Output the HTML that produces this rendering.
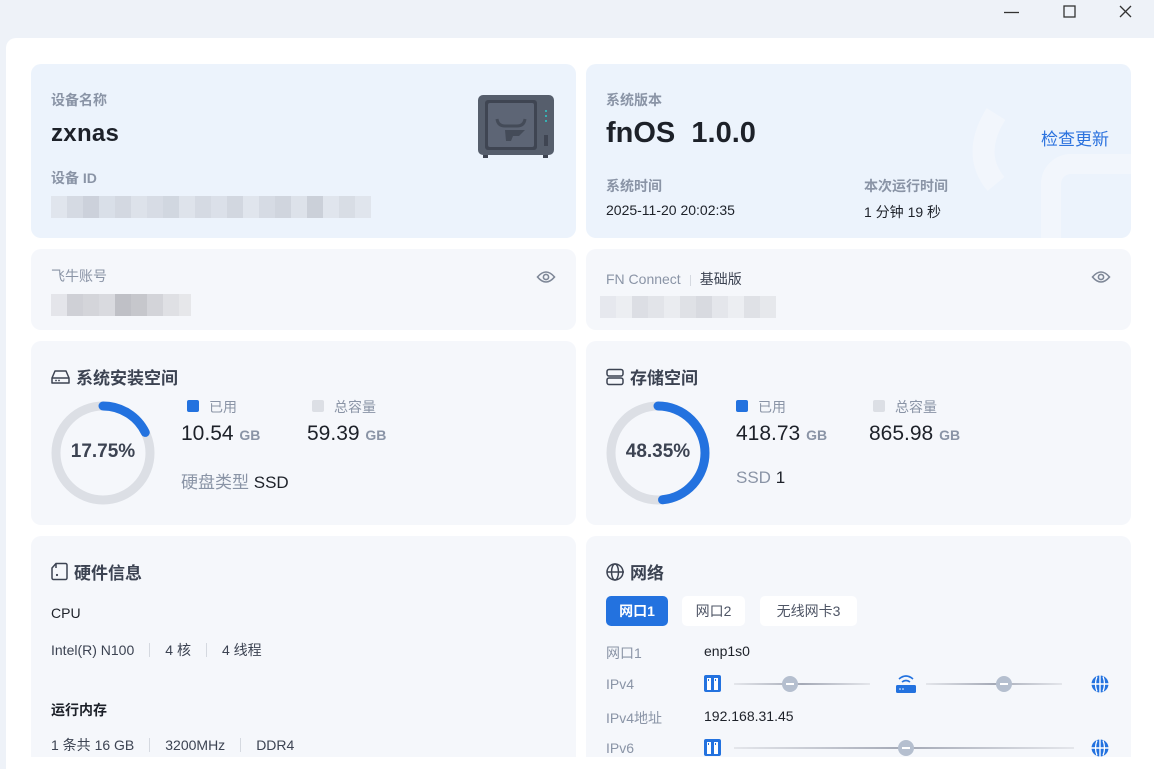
<!DOCTYPE html>
<html><head><meta charset="utf-8">
<style>
*{margin:0;padding:0;box-sizing:border-box}
body{width:1154px;height:769px;overflow:hidden;background:#eef2f8;font-family:"Liberation Sans","Noto Sans CJK SC",sans-serif;position:relative;color:#1d2129}
.panel{position:absolute;left:6px;top:38px;width:1148px;height:731px;background:#fff;border-radius:10px 0 0 0;overflow:hidden}
.clip{position:absolute;left:0;top:0;width:1148px;height:719px;overflow:hidden}
.card{position:absolute;background:#f5f7fb;border-radius:10px}
.blue{background:#ecf3fc}
.lbl{position:absolute;font-size:14px;color:#8a94a6}
.t{position:absolute;white-space:nowrap}
.h{position:absolute;font-size:17px;font-weight:bold;color:#3c4352;display:flex;align-items:center;gap:6px}
.blk{position:absolute;height:22px;display:flex}
.blk i{display:block;width:16px;height:22px}
.sep{display:inline-block;width:1px;height:14px;background:#d5d9e0;margin:0 15px;vertical-align:-2px}
.tab{position:absolute;top:60px;height:30px;border-radius:5px;background:#fff;font-size:14px;color:#4e5565;text-align:center;line-height:30px}
</style></head><body>
<div class="t" style="left:1004px;top:4px;font-size:0">
<svg width="140" height="18" viewBox="0 0 140 18"><path d="M0 8.5h15" stroke="#333" stroke-width="1.3"/><rect x="60" y="2" width="11" height="11" fill="none" stroke="#333" stroke-width="1.3"/><path d="M116 2l11 11M127 2l-11 11" stroke="#333" stroke-width="1.3"/></svg></div>
<div class="panel"><div class="clip">

<div class="card blue" style="left:25px;top:26px;width:545px;height:174px">
<div class="lbl" style="left:20px;top:26px;font-weight:bold">设备名称</div>
<div class="t" style="left:20px;top:56px;font-size:24px;font-weight:bold;color:#1d2129;letter-spacing:.3px">zxnas</div>
<div class="lbl" style="left:20px;top:104px;font-weight:bold">设备 ID</div>
<div class="blk" style="left:20px;top:132px;opacity:.9">
<i style="background:#dfe4ec"></i><i style="background:#d3d8e1"></i><i style="background:#c9ced8"></i><i style="background:#d8dde6"></i><i style="background:#d1d6df"></i><i style="background:#dce1e9"></i><i style="background:#d5dae3"></i><i style="background:#cfd4dd"></i><i style="background:#dde2ea"></i><i style="background:#d3d8e1"></i><i style="background:#dadfe7"></i><i style="background:#d0d5de"></i><i style="background:#dfe4ec"></i><i style="background:#d4d9e2"></i><i style="background:#cdd2db"></i><i style="background:#dce1e9"></i><i style="background:#c8cdd6"></i><i style="background:#dfe4ec"></i><i style="background:#d6dbe3"></i><i style="background:#dfe4ec"></i></div>
<svg style="position:absolute;left:446px;top:30px" width="78" height="66" viewBox="0 0 78 66">
<rect x="1" y="1" width="76" height="60" rx="5" fill="#565e6c"/>
<rect x="8" y="6" width="52" height="50" rx="3" fill="#3f4552"/>
<rect x="11" y="9" width="46" height="44" rx="2" fill="#5d6575"/>
<path d="M20 25q1 7 8 7h12q7 0 8-7" fill="none" stroke="#444b58" stroke-width="3"/>
<path d="M28 36h20l-6 6h-6l-2 5h-5z" fill="#444b58"/>
<circle cx="69" cy="17" r="1" fill="#2dc9c9"/><circle cx="69" cy="22" r="1" fill="#2dc9c9"/><circle cx="69" cy="27" r="1" fill="#2dc9c9"/>
<rect x="67" y="41" width="4" height="11" fill="#3f4552"/>
<rect x="6" y="61" width="5" height="3" fill="#3f4552"/><rect x="66" y="61" width="5" height="3" fill="#3f4552"/>
</svg>
</div>

<div class="card blue" style="left:580px;top:26px;width:545px;height:174px;overflow:hidden">
<svg style="position:absolute;left:380px;top:40px" width="170" height="140" viewBox="0 0 170 140"><path d="M30 10q-25 40 0 70" stroke="#f2f6fc" stroke-width="22" fill="none"/><rect x="85" y="60" width="100" height="100" rx="20" fill="none" stroke="#f2f6fc" stroke-width="20"/></svg>
<div class="lbl" style="left:20px;top:26px;font-weight:bold">系统版本</div>
<div class="t" style="left:20px;top:53px;font-size:29px;font-weight:bold;color:#1d2129">fnOS&nbsp; 1.0.0</div>
<div class="t" style="left:455px;top:61px;font-size:17px;color:#2b72de">检查更新</div>
<div class="lbl" style="left:20px;top:112px;font-weight:bold">系统时间</div>
<div class="t" style="left:20px;top:138px;font-size:14px;color:#1d2129">2025-11-20 20:02:35</div>
<div class="lbl" style="left:278px;top:112px;font-weight:bold">本次运行时间</div>
<div class="t" style="left:278px;top:138px;font-size:14px;color:#1d2129">1 分钟 19 秒</div>
</div>

<div class="card" style="left:25px;top:211px;width:545px;height:81px">
<div class="lbl" style="left:20px;top:17px">飞牛账号</div>
<div class="blk" style="left:20px;top:45px"><i style="background:#e4e5ea"></i><i style="background:#cfd0d6"></i><i style="background:#d4d5da"></i><i style="background:#d9dadf"></i><i style="background:#bfc0c6"></i><i style="background:#c6c7cc"></i><i style="background:#d3d4d9"></i><i style="background:#dfe0e4"></i><i style="background:#e6e7ea;width:12px"></i></div>
<svg style="position:absolute;left:505px;top:20px" width="20" height="16" viewBox="0 0 20 16"><path d="M1.5 8Q10-2 18.5 8Q10 18 1.5 8z" fill="none" stroke="#7e8797" stroke-width="1.6"/><circle cx="10" cy="8" r="2.6" fill="none" stroke="#7e8797" stroke-width="1.6"/></svg>
</div>

<div class="card" style="left:580px;top:211px;width:545px;height:81px">
<div class="t" style="left:20px;top:20px;font-size:14px;color:#8a94a6">FN Connect<span class="sep" style="margin:0 9px;height:11px"></span><span style="color:#3c4352">基础版</span></div>
<div class="blk" style="left:14px;top:47px"><i style="background:#e6e8ee"></i><i style="background:#eceef2"></i><i style="background:#dcdee4"></i><i style="background:#e2e4e9"></i><i style="background:#eaecf0"></i><i style="background:#dfe1e6"></i><i style="background:#d8dae0"></i><i style="background:#e4e6eb"></i><i style="background:#eceef2"></i><i style="background:#dfe1e6"></i><i style="background:#e6e8ec"></i></div>
<svg style="position:absolute;left:505px;top:20px" width="20" height="16" viewBox="0 0 20 16"><path d="M1.5 8Q10-2 18.5 8Q10 18 1.5 8z" fill="none" stroke="#7e8797" stroke-width="1.6"/><circle cx="10" cy="8" r="2.6" fill="none" stroke="#7e8797" stroke-width="1.6"/></svg>
</div>

<div class="card" style="left:25px;top:303px;width:545px;height:184px">
<div class="h" style="left:20px;top:23px"><svg width="19" height="16" viewBox="0 0 19 16"><path d="M1 9L4 2h11l3 7v5H1z" fill="none" stroke="#3c4352" stroke-width="1.5" stroke-linejoin="round"/><path d="M1 9h17" stroke="#3c4352" stroke-width="1.5"/><circle cx="5" cy="11.5" r=".9" fill="#3c4352"/><circle cx="8" cy="11.5" r=".9" fill="#3c4352"/></svg>系统安装空间</div>
<svg style="position:absolute;left:19px;top:59px" width="106" height="106" viewBox="0 0 106 106"><circle cx="53" cy="53" r="47" fill="none" stroke="#dcdfe5" stroke-width="9"/><circle cx="53" cy="53" r="47" fill="none" stroke="#2372df" stroke-width="9" stroke-linecap="round" stroke-dasharray="52.4 300" transform="rotate(-90 53 53)"/></svg>
<div class="t" style="left:19px;top:100px;width:106px;text-align:center;font-size:19px;font-weight:bold;color:#3c4352">17.75%</div>
<div class="t" style="left:156px;top:59px;width:12px;height:12px;background:#2372df;border-radius:2px"></div>
<div class="lbl" style="left:178px;top:56px">已用</div>
<div class="t" style="left:150px;top:81px;font-size:21px;color:#1d2129">10.54 <span style="font-size:14px;color:#8a94a6;font-weight:bold">GB</span></div>
<div class="t" style="left:281px;top:59px;width:12px;height:12px;background:#dcdfe5;border-radius:2px"></div>
<div class="lbl" style="left:303px;top:56px">总容量</div>
<div class="t" style="left:276px;top:81px;font-size:21px;color:#1d2129">59.39 <span style="font-size:14px;color:#8a94a6;font-weight:bold">GB</span></div>
<div class="t" style="left:150px;top:127px;font-size:17px;color:#8a94a6">硬盘类型 <span style="color:#1d2129">SSD</span></div>
</div>

<div class="card" style="left:580px;top:303px;width:545px;height:184px">
<div class="h" style="left:20px;top:23px"><svg width="18" height="18" viewBox="0 0 18 18"><rect x="1" y="1.5" width="16" height="6.5" rx="2" fill="none" stroke="#3c4352" stroke-width="1.5"/><rect x="1" y="10" width="16" height="6.5" rx="2" fill="none" stroke="#3c4352" stroke-width="1.5"/></svg>存储空间</div>
<svg style="position:absolute;left:19px;top:59px" width="106" height="106" viewBox="0 0 106 106"><circle cx="53" cy="53" r="47" fill="none" stroke="#dcdfe5" stroke-width="9"/><circle cx="53" cy="53" r="47" fill="none" stroke="#2372df" stroke-width="9" stroke-linecap="round" stroke-dasharray="142.8 300" transform="rotate(-90 53 53)"/></svg>
<div class="t" style="left:19px;top:100px;width:106px;text-align:center;font-size:19px;font-weight:bold;color:#3c4352">48.35%</div>
<div class="t" style="left:150px;top:59px;width:12px;height:12px;background:#2372df;border-radius:2px"></div>
<div class="lbl" style="left:172px;top:56px">已用</div>
<div class="t" style="left:150px;top:81px;font-size:21px;color:#1d2129">418.73 <span style="font-size:14px;color:#8a94a6;font-weight:bold">GB</span></div>
<div class="t" style="left:287px;top:59px;width:12px;height:12px;background:#dcdfe5;border-radius:2px"></div>
<div class="lbl" style="left:309px;top:56px">总容量</div>
<div class="t" style="left:283px;top:81px;font-size:21px;color:#1d2129">865.98 <span style="font-size:14px;color:#8a94a6;font-weight:bold">GB</span></div>
<div class="t" style="left:150px;top:127px;font-size:17px;color:#8a94a6">SSD <span style="color:#1d2129">1</span></div>
</div>

<div class="card" style="left:25px;top:498px;width:545px;height:260px">
<div class="h" style="left:20px;top:23px"><svg width="17" height="19" viewBox="0 0 17 19"><path d="M5 1.5h9.5a1.5 1.5 0 0 1 1.5 1.5v13a1.5 1.5 0 0 1-1.5 1.5h-12A1.5 1.5 0 0 1 1 16V6z" fill="none" stroke="#3c4352" stroke-width="1.5"/><path d="M5 1.5v4.5" stroke="#3c4352" stroke-width="1.5"/><circle cx="6" cy="13" r="1.1" fill="#3c4352"/></svg>硬件信息</div>
<div class="t" style="left:20px;top:69px;font-size:14px;color:#1d2129">CPU</div>
<div class="t" style="left:20px;top:104px;font-size:14px;color:#3c4352">Intel(R) N100<span class="sep"></span>4 核<span class="sep"></span>4 线程</div>
<div class="t" style="left:20px;top:164px;font-size:14px;font-weight:bold;color:#1d2129">运行内存</div>
<div class="t" style="left:20px;top:199px;font-size:14px;color:#3c4352">1 条共 16 GB<span class="sep"></span>3200MHz<span class="sep"></span>DDR4</div>
</div>

<div class="card" style="left:580px;top:498px;width:545px;height:260px">
<div class="h" style="left:20px;top:23px"><svg width="18" height="18" viewBox="0 0 18 18" fill="none" stroke="#3c4352" stroke-width="1.5"><circle cx="9" cy="9" r="8"/><ellipse cx="9" cy="9" rx="3.5" ry="8"/><path d="M1 9h17"/></svg>网络</div>
<div class="tab" style="left:20px;width:62px;background:#2372df;color:#fff;font-weight:bold">网口1</div>
<div class="tab" style="left:96px;width:63px">网口2</div>
<div class="tab" style="left:174px;width:97px">无线网卡3</div>
<div class="lbl" style="left:20px;top:107px">网口1</div>
<div class="t" style="left:118px;top:107px;font-size:14px;color:#1d2129">enp1s0</div>
<div class="lbl" style="left:20px;top:140px">IPv4</div>
<div class="lbl" style="left:20px;top:172px">IPv4地址</div>
<div class="t" style="left:118px;top:172px;font-size:14px;color:#1d2129">192.168.31.45</div>
<div class="lbl" style="left:20px;top:204px">IPv6</div>
<svg style="position:absolute;left:0;top:0" width="545" height="260" viewBox="0 0 545 260">
<defs><linearGradient id="g" x1="0" x2="1"><stop offset="0" stop-color="#e4e6eb"/><stop offset=".5" stop-color="#a4a9b6"/><stop offset="1" stop-color="#e4e6eb"/></linearGradient>
<g id="nic"><rect x="0" y="0" width="17" height="17" rx="2" fill="#2372df"/><rect x="3" y="3" width="4" height="12" fill="#fff"/><rect x="10" y="3" width="4" height="12" fill="#fff"/><rect x="4" y="4" width="1" height="2" fill="#2372df"/><rect x="11" y="4" width="1" height="2" fill="#2372df"/></g>
<g id="web"><circle cx="9" cy="9" r="8.5" fill="#2372df"/><path d="M0.5 9h17M9 0.5v17" stroke="#fff" stroke-width="1.4"/><path d="M6 1.5q-3 7.5 0 15M12 1.5q3 7.5 0 15" stroke="#fff" stroke-width="1.3" fill="none"/></g>
<g id="dot"><circle cx="8" cy="8" r="8" fill="#b5bfcf"/><path d="M4 8h8" stroke="#fff" stroke-width="2"/></g></defs>
<use href="#nic" x="118" y="139"/>
<rect x="148" y="147" width="136" height="2" fill="url(#g)"/>
<use href="#dot" x="196" y="140"/>
<path d="M313 143q7-6 14 0M316 146q4-3 8 0" stroke="#2372df" stroke-width="1.6" fill="none"/><rect x="310" y="149" width="20" height="8" rx="1.5" fill="#2372df"/><circle cx="314" cy="153" r=".8" fill="#fff"/><circle cx="317" cy="153" r=".8" fill="#fff"/>
<rect x="340" y="147" width="136" height="2" fill="url(#g)"/>
<use href="#dot" x="410" y="140"/>
<use href="#web" x="505" y="139"/>
<use href="#nic" x="118" y="203"/>
<rect x="148" y="211" width="340" height="2" fill="url(#g)"/>
<use href="#dot" x="312" y="204"/>
<use href="#web" x="505" y="203"/>
</svg>
</div>

</div></div>
</body></html>
